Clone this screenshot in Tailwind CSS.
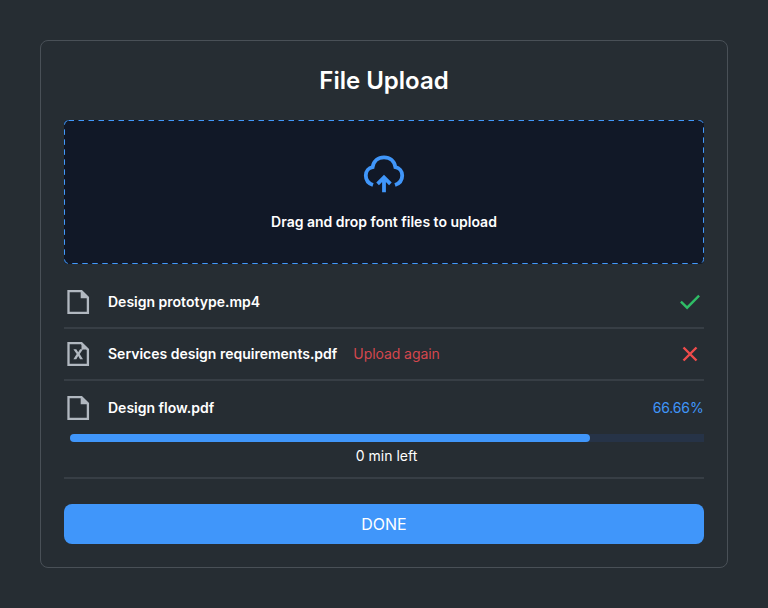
<!DOCTYPE html>
<html lang="en">
<head>
<meta charset="utf-8">
<title>File Upload</title>
<script src="https://cdn.jsdelivr.net/npm/@tailwindcss/browser@4"></script>
</head>
<body class="bg-[#262d33] font-['Inter',sans-serif] text-white">
<main class="h-[608px] w-[768px] p-10">
  <section class="flex h-[528px] flex-col rounded-lg border border-[#495057] px-[23px] pt-6">
    <h1 class="h-8 text-center text-2xl leading-8 font-semibold">File Upload</h1>

    <div class="relative mt-[23px] flex h-36 shrink-0 flex-col items-center rounded bg-[#111827] pt-8">
      <svg class="absolute inset-0" width="640" height="144" fill="none" stroke="#4299fb"><rect x=".5" y=".5" width="639" height="143" rx="4" stroke-dasharray="5.500 4.500"/></svg>
      <svg width="48" height="44" viewBox="0 0 48 44" fill="none" stroke="#4096fa" stroke-width="3.800">
        <path d="M13 33C8.500 31.500 5.800 28 5.800 23.500C5.800 19 8.700 15.900 12.600 15.200C13.600 9.200 18 5.400 24 5.400S34.400 9.200 35.400 15.200C39.300 15.900 42.200 19 42.200 23.500C42.200 28 39.500 31.500 35 33"/>
        <path d="M24 40.300V25M17.600 31.800L24 25.400L30.400 31.800"/>
      </svg>
      <p class="mt-4 text-sm leading-5 font-semibold">Drag and drop font files to upload</p>
    </div>

    <ul class="mt-3 text-sm leading-5">
      <li class="flex h-[53px] items-center border-b-2 border-[#373e45] pl-[2px]">
        <svg width="24" height="26" viewBox="0 0 24 26" fill="none" stroke="#b1b8c0" stroke-width="2.300"><path d="M2.500 2.100H15.500L21.900 8.500V23.900H2.500Z"/><path d="M14.700 2V9.200H22Z" fill="#b1b8c0" stroke="none"/></svg>
        <span class="ml-[18px] font-semibold">Design prototype.mp4</span>
        <svg class="mr-1 ml-auto" width="20" height="16" viewBox="0 0 20 16" fill="none" stroke="#2fbd66" stroke-width="2.400"><path d="M.9 7.700L7.100 13.700L19.100 1.700"/></svg>
      </li>
      <li class="flex h-[52px] items-center border-b-2 border-[#373e45] pl-[2px]">
        <svg width="24" height="26" viewBox="0 0 24 26" fill="none" stroke="#b1b8c0" stroke-width="2.300"><path d="M2.500 2.100H15.500L21.900 8.500V23.900H2.500Z"/><path d="M15.500 2V8.500H22Z" fill="#b1b8c0" stroke="none"/><path d="M7.400 8.200H10.300L12.200 11.300L14.100 8.200H17L13.700 13.100L17 18.200H14.100L12.200 15L10.300 18.200H7.400L10.700 13.100Z" fill="#b1b8c0" stroke="none"/></svg>
        <span class="ml-[18px] font-semibold">Services design requirements.pdf</span>
        <span class="ml-4 tracking-[-0.005em] text-[#d4474e]">Upload again</span>
        <svg class="mr-1.5 ml-auto" width="16" height="16" viewBox="0 0 16 16" fill="none" stroke="#ef4b4b" stroke-width="2.400"><path d="M1.500 1.500L14.500 14.500M14.500 1.500L1.500 14.500"/></svg>
      </li>
      <li class="h-[98px] border-b-2 border-[#373e45]">
        <div class="flex h-[53px] items-center pl-[2px]">
          <svg width="24" height="26" viewBox="0 0 24 26" fill="none" stroke="#b1b8c0" stroke-width="2.300"><path d="M2.500 2.100H15.500L21.900 8.500V23.900H2.500Z"/><path d="M14.700 2V9.200H22Z" fill="#b1b8c0" stroke="none"/></svg>
          <span class="ml-[18px] font-semibold">Design flow.pdf</span>
          <span class="mr-[0.5px] ml-auto tracking-[-0.010em] text-[#4096fa]">66.66%</span>
        </div>
        <div class="ml-1.5 h-2 rounded-l-full bg-[#263347]"><div class="h-2 w-[520px] rounded-full bg-[#4096fa]"></div></div>
        <p class="mt-1 pl-[5px] text-center">0 min left</p>
      </li>
    </ul>

    <button class="mt-[25px] h-10 shrink-0 rounded-lg bg-[#4096fa] text-base">DONE</button>
  </section>
</main>
</body>
</html>
